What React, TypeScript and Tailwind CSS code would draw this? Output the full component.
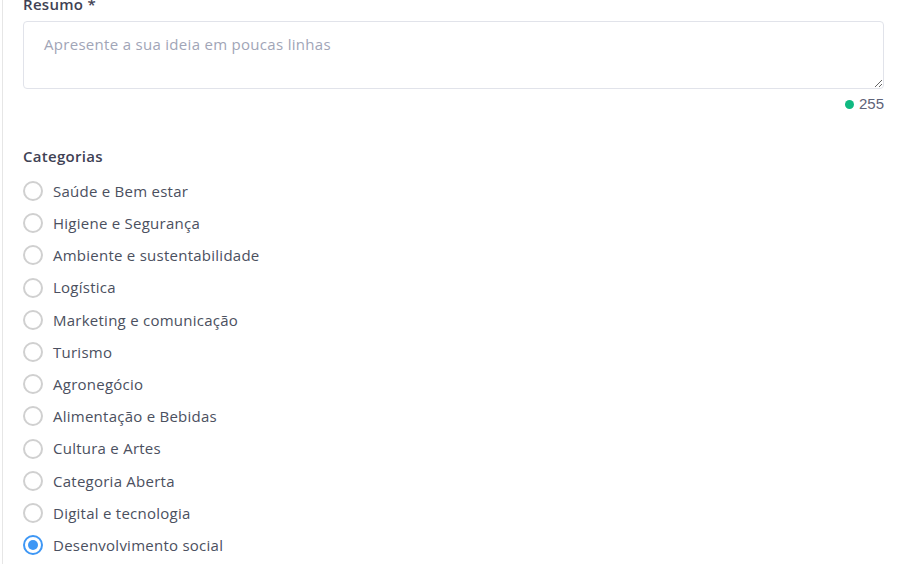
const categorias = [
  'Saúde e Bem estar',
  'Higiene e Segurança',
  'Ambiente e sustentabilidade',
  'Logística',
  'Marketing e comunicação',
  'Turismo',
  'Agronegócio',
  'Alimentação e Bebidas',
  'Cultura e Artes',
  'Categoria Aberta',
  'Digital e tecnologia',
  'Desenvolvimento social',
];

function Radio({ label, checked }: { label: string; checked?: boolean }) {
  return (
    <label className="flex items-center h-[32.2px] gap-[10px] cursor-pointer">
      <span
        className={
          checked
            ? 'w-5 h-5 rounded-full border-2 border-[#3e97f5] flex items-center justify-center'
            : 'w-5 h-5 rounded-full border-2 border-[#d0d0d0]'
        }
      >
        {checked && <span className="w-[10px] h-[10px] rounded-full bg-[#3e97f5]" />}
      </span>
      <span className="text-[15px] tracking-[0.25px] text-[#4b5060]">{label}</span>
    </label>
  );
}

export default function App() {
  return (
    <div className="h-[570px] overflow-hidden bg-white font-['Open_Sans',sans-serif]">
      <div className="ml-[2px] border-l border-[#e6e6e6] h-full pl-5 pr-[20px]">
        <div className="-mt-[6px]">
          <div className="text-[15px] tracking-[0.3px] font-semibold text-[#3f4254] leading-5">Resumo *</div>
          <textarea
            className="mt-[7px] block w-full h-[68px] border border-[#e1e3ea] rounded-[4px] px-5 py-[11px] text-[15px] tracking-[0.3px] text-[#3f4254] placeholder:text-[#a1a5b7] outline-none"
            placeholder="Apresente a sua ideia em poucas linhas"
          />
          <div className="flex justify-end items-center gap-[5px] mt-[6px] h-[18px]">
            <span className="w-[9px] h-[9px] rounded-full bg-[#10b981]" />
            <span className="text-[15px] text-[#5e6278] font-['Liberation_Sans',sans-serif]">255</span>
          </div>
        </div>
        <div className="mt-[33px] text-[15px] tracking-[0.3px] font-semibold text-[#3f4254] leading-5">Categorias</div>
        <div className="mt-[9px] flex flex-col">
          {categorias.map((c, i) => (
            <Radio key={c} label={c} checked={i === categorias.length - 1} />
          ))}
        </div>
      </div>
    </div>
  );
}
